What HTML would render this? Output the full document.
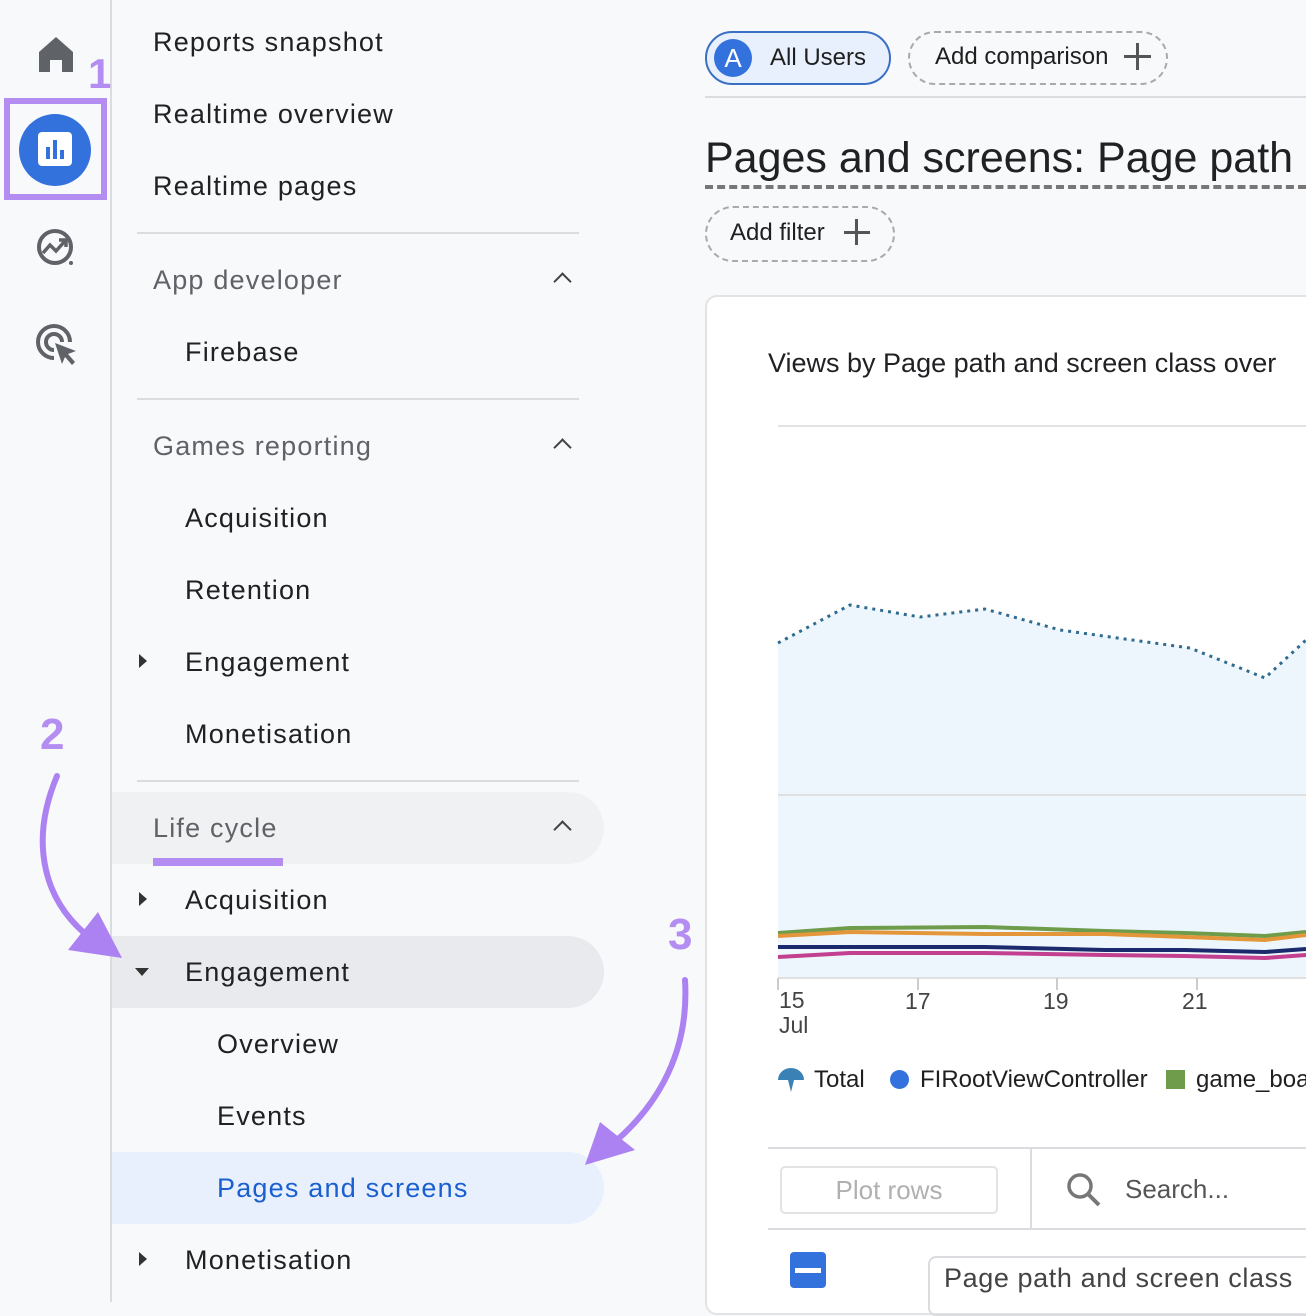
<!DOCTYPE html>
<html><head><meta charset="utf-8"><style>
*{margin:0;padding:0;box-sizing:border-box}
body{width:1306px;height:1302px;background:#f8f9fb;font-family:"Liberation Sans",sans-serif;position:relative;overflow:hidden;color:#1f1f1f}
.a{position:absolute;white-space:nowrap}
.nav{font-size:27px;color:#202124;letter-spacing:1.2px;margin-top:2px}
.hd{font-size:27px;color:#5f6368;letter-spacing:1.2px;margin-top:2px}
.sep{position:absolute;left:137px;width:442px;height:2px;background:#dadce0}
.tri{position:absolute;width:0;height:0}
.chev{position:absolute;width:13px;height:13px;border-left:2.5px solid #444;border-top:2.5px solid #444;transform:rotate(45deg)}
</style></head><body>
<div class="a" style="left:110px;top:0;width:2px;height:1302px;background:#dadce0"></div>
<svg class="a" style="left:36px;top:34px" width="40" height="40" viewBox="0 0 40 40"><path d="M3 18 L20 3 L37 18 V38 H26 V26 H14 V38 H3Z" fill="#5f6368"/></svg>
<div class="a" style="left:4px;top:98px;width:103px;height:102px;border:6px solid #b48df2"></div>
<div class="a" style="left:19px;top:114px;width:72px;height:72px;border-radius:50%;background:#3372dc"></div>
<div class="a" style="left:38px;top:132px;width:34px;height:34px;border-radius:4px;background:#fff"></div>
<div class="a" style="left:46px;top:147px;width:4px;height:12px;background:#3372dc"></div>
<div class="a" style="left:53px;top:140px;width:4px;height:19px;background:#3372dc"></div>
<div class="a" style="left:60px;top:150px;width:4px;height:9px;background:#3372dc"></div>
<div class="a" style="left:88px;top:50px;font-size:42px;font-weight:bold;color:#b48df2">1</div>
<svg class="a" style="left:34px;top:226px" width="44" height="44" viewBox="0 0 44 44"><circle cx="21" cy="21" r="16" fill="none" stroke="#5f6368" stroke-width="4"/><path d="M9 27 L16 19 L22 25 L31 15 M25 14 H32 V21" fill="none" stroke="#5f6368" stroke-width="3.5"/><circle cx="37" cy="37" r="4" fill="#f8f9fb"/><circle cx="37" cy="37" r="2" fill="#5f6368"/></svg>
<svg class="a" style="left:34px;top:322px" width="46" height="46" viewBox="0 0 46 46"><path d="M20 36 A16 16 0 1 1 36 20" fill="none" stroke="#5f6368" stroke-width="4"/><path d="M20 28 A8 8 0 1 1 28 20" fill="none" stroke="#5f6368" stroke-width="4"/><path d="M21 21 L42 29 L34 32 L41 40 L38 43 L31 35 L28 42Z" fill="#5f6368"/></svg>
<div class="a" style="left:40px;top:710px;font-size:44px;font-weight:bold;color:#b48df2">2</div>
<div class="a" style="left:668px;top:910px;font-size:44px;font-weight:bold;color:#b48df2">3</div>
<div class="a nav" style="left:153px;top:25px">Reports snapshot</div>
<div class="a nav" style="left:153px;top:97px">Realtime overview</div>
<div class="a nav" style="left:153px;top:169px">Realtime pages</div>
<div class="sep" style="top:232px"></div>
<div class="a hd" style="left:153px;top:263px">App developer</div>
<div class="chev" style="left:556px;top:275px"></div>
<div class="a nav" style="left:185px;top:335px">Firebase</div>
<div class="sep" style="top:398px"></div>
<div class="a hd" style="left:153px;top:429px">Games reporting</div>
<div class="chev" style="left:556px;top:441px"></div>
<div class="a nav" style="left:185px;top:501px">Acquisition</div>
<div class="a nav" style="left:185px;top:573px">Retention</div>
<div class="tri" style="left:139px;top:654px;border-left:8px solid #333;border-top:7px solid transparent;border-bottom:7px solid transparent"></div>
<div class="a nav" style="left:185px;top:645px">Engagement</div>
<div class="a nav" style="left:185px;top:717px">Monetisation</div>
<div class="sep" style="top:780px"></div>
<div class="a" style="left:112px;top:792px;width:492px;height:72px;background:#f0f1f3;border-radius:0 36px 36px 0"></div>
<div class="a hd" style="left:153px;top:811px">Life cycle</div>
<div class="a" style="left:153px;top:858px;width:130px;height:8px;background:#b48df2"></div>
<div class="chev" style="left:556px;top:823px"></div>
<div class="tri" style="left:139px;top:892px;border-left:8px solid #333;border-top:7px solid transparent;border-bottom:7px solid transparent"></div>
<div class="a nav" style="left:185px;top:883px">Acquisition</div>
<div class="a" style="left:112px;top:936px;width:492px;height:72px;background:#e8eaed;border-radius:0 36px 36px 0"></div>
<div class="tri" style="left:135px;top:968px;border-top:8px solid #333;border-left:7px solid transparent;border-right:7px solid transparent"></div>
<div class="a nav" style="left:185px;top:955px">Engagement</div>
<div class="a nav" style="left:217px;top:1027px">Overview</div>
<div class="a nav" style="left:217px;top:1099px">Events</div>
<div class="a" style="left:112px;top:1152px;width:492px;height:72px;background:#e8f0fe;border-radius:0 36px 36px 0"></div>
<div class="a nav" style="left:217px;top:1171px;color:#1a5fd0">Pages and screens</div>
<div class="tri" style="left:139px;top:1252px;border-left:8px solid #333;border-top:7px solid transparent;border-bottom:7px solid transparent"></div>
<div class="a nav" style="left:185px;top:1243px">Monetisation</div>
<svg class="a" style="left:0;top:0" width="1306" height="1302"><g fill="none" stroke="#ac82f3" stroke-width="6" stroke-linecap="round"><path d="M57 776 C30 840 40 905 100 945"/><path d="M685 980 C690 1060 650 1115 605 1150"/></g><path d="M68 950 L122 958 L98 912Z" fill="#ac82f3"/><path d="M585 1165 L635 1150 L600 1122Z" fill="#ac82f3"/></svg>
<div class="a" style="left:705px;top:31px;width:186px;height:54px;border:2px solid #3b6fc4;border-radius:27px;background:#e8f0fe"></div>
<div class="a" style="left:714px;top:39px;width:38px;height:38px;border-radius:50%;background:#3372dc;color:#fff;font-size:26px;text-align:center;line-height:38px">A</div>
<div class="a" style="left:770px;top:44px;font-size:24px">All Users</div>
<div class="a" style="left:908px;top:31px;width:260px;height:54px;border:2px dashed #aaa;border-radius:27px"></div>
<div class="a" style="left:935px;top:43px;font-size:24px">Add comparison</div>
<div class="a" style="left:1124px;top:55px;width:27px;height:3px;background:#555"></div>
<div class="a" style="left:1136px;top:43px;width:3px;height:27px;background:#555"></div>
<div class="a" style="left:705px;top:96px;width:601px;height:2px;background:#dadce0"></div>
<div class="a" style="left:705px;top:134px;font-size:43px;color:#202124">Pages and screens: Page path a</div>
<div class="a" style="left:705px;top:185px;width:601px;border-top:4px dashed #777"></div>
<div class="a" style="left:705px;top:206px;width:190px;height:56px;border:2px dashed #aaa;border-radius:28px"></div>
<div class="a" style="left:730px;top:219px;font-size:24px">Add filter</div>
<div class="a" style="left:844px;top:231px;width:26px;height:3px;background:#555"></div>
<div class="a" style="left:855px;top:219px;width:3px;height:26px;background:#555"></div>
<div class="a" style="left:705px;top:295px;width:620px;height:1020px;background:#fff;border:2px solid #e3e3e3;border-radius:12px"></div>
<div class="a" style="left:768px;top:348px;font-size:27px;color:#202124">Views by Page path and screen class over</div>
<svg class="a" style="left:705px;top:400px" width="601" height="600">
<line x1="73" y1="26" x2="601" y2="26" stroke="#e3e3e3" stroke-width="2"/>
<path d="M73 243 L145 205 L215 217 L280 209 L355 230 L485 248 L560 278 L601 240 V578 H73Z" fill="#eef6fd"/>
<line x1="73" y1="395" x2="601" y2="395" stroke="#e0e0e0" stroke-width="2"/>
<path d="M73 243 L145 205 L215 217 L280 209 L355 230 L485 248 L560 278 L601 240" fill="none" stroke="#2f6b8f" stroke-width="3" stroke-dasharray="3 5"/>
<path d="M73 533 L145 528 L280 527 L400 531 L480 533 L560 536 L601 532" fill="none" stroke="#6e9c4b" stroke-width="4"/>
<path d="M73 536 L145 532 L280 534 L400 534 L480 537 L560 540 L601 535" fill="none" stroke="#e3963a" stroke-width="4"/>
<path d="M73 547 L145 547 L280 547 L400 550 L480 550 L560 552 L601 549" fill="none" stroke="#1a2a6c" stroke-width="4"/>
<path d="M73 557 L145 553 L280 553 L400 555 L480 556 L560 558 L601 555" fill="none" stroke="#c2408f" stroke-width="4"/>
<line x1="73" y1="578" x2="601" y2="578" stroke="#e0e0e0" stroke-width="2"/>
<g stroke="#ccc" stroke-width="2"><line x1="73" y1="578" x2="73" y2="590"/><line x1="213" y1="578" x2="213" y2="590"/><line x1="352" y1="578" x2="352" y2="590"/><line x1="492" y1="578" x2="492" y2="590"/></g>
</svg>
<div class="a" style="left:779px;top:988px;font-size:23px;color:#444;line-height:25px">15<br>Jul</div>
<div class="a" style="left:905px;top:988px;font-size:23px;color:#444">17</div>
<div class="a" style="left:1043px;top:988px;font-size:23px;color:#444">19</div>
<div class="a" style="left:1182px;top:988px;font-size:23px;color:#444">21</div>
<svg class="a" style="left:776px;top:1066px" width="30" height="28"><path d="M2 14 A13 12 0 0 1 28 14 L18 14 L15 26 L12 14Z" fill="#3a82b5"/></svg>
<div class="a" style="left:814px;top:1066px;font-size:24px">Total</div>
<div class="a" style="left:890px;top:1070px;width:19px;height:19px;border-radius:50%;background:#3372dc"></div>
<div class="a" style="left:920px;top:1066px;font-size:24px">FIRootViewController</div>
<div class="a" style="left:1166px;top:1070px;width:19px;height:19px;background:#6e9c4b"></div>
<div class="a" style="left:1196px;top:1066px;font-size:24px">game_board</div>
<div class="a" style="left:768px;top:1147px;width:538px;height:2px;background:#dadce0"></div>
<div class="a" style="left:768px;top:1228px;width:538px;height:2px;background:#dadce0"></div>
<div class="a" style="left:1030px;top:1148px;width:2px;height:80px;background:#dadce0"></div>
<div class="a" style="left:780px;top:1166px;width:218px;height:48px;border:2px solid #e3e3e3;border-radius:5px;color:#b0b0b0;font-size:26px;text-align:center;line-height:44px">Plot rows</div>
<svg class="a" style="left:1064px;top:1170px" width="40" height="40"><circle cx="16" cy="16" r="11" fill="none" stroke="#777" stroke-width="3.5"/><line x1="24" y1="24" x2="35" y2="35" stroke="#777" stroke-width="4"/></svg>
<div class="a" style="left:1125px;top:1174px;font-size:26px;color:#555">Search...</div>
<div class="a" style="left:790px;top:1252px;width:36px;height:36px;border-radius:4px;background:#3372dc"></div>
<div class="a" style="left:795px;top:1268px;width:26px;height:5px;background:#fff"></div>
<div class="a" style="left:928px;top:1256px;width:400px;height:60px;border:2px solid #dadce0;border-radius:8px"></div>
<div class="a" style="left:944px;top:1263px;font-size:27px;color:#444;letter-spacing:0.6px">Page path and screen class</div>
</body></html>
